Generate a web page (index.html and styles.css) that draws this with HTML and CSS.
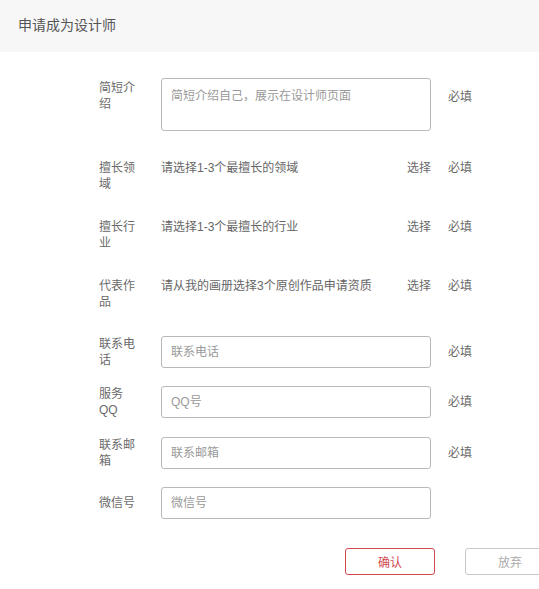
FILE: index.html
```html
<!DOCTYPE html>
<html lang="zh-CN">
<head>
  <meta charset="UTF-8">
  <meta name="viewport" content="width=device-width, initial-scale=1.0">
  <title>申请成为设计师</title>
  <link rel="stylesheet" href="styles.css">
</head>
<body>
  <header class="page-head">
    <h1>申请成为设计师</h1>
  </header>
  <form class="apply-form">
    <div class="row row-area">
      <label class="label">简短介绍</label>
      <textarea class="field area" placeholder="简短介绍自己，展示在设计师页面"></textarea>
      <span class="req">必填</span>
    </div>
    <div class="row row-text">
      <label class="label">擅长领域</label>
      <div class="field pick"><span>请选择1-3个最擅长的领域</span><a class="choose">选择</a></div>
      <span class="req">必填</span>
    </div>
    <div class="row row-text">
      <label class="label">擅长行业</label>
      <div class="field pick"><span>请选择1-3个最擅长的行业</span><a class="choose">选择</a></div>
      <span class="req">必填</span>
    </div>
    <div class="row row-text">
      <label class="label">代表作品</label>
      <div class="field pick"><span>请从我的画册选择3个原创作品申请资质</span><a class="choose">选择</a></div>
      <span class="req">必填</span>
    </div>
    <div class="row row-input">
      <label class="label">联系电话</label>
      <input class="field input" type="text" placeholder="联系电话">
      <span class="req">必填</span>
    </div>
    <div class="row row-input row-qq">
      <label class="label">服务QQ</label>
      <input class="field input" type="text" placeholder="QQ号">
      <span class="req">必填</span>
    </div>
    <div class="row row-input">
      <label class="label">联系邮箱</label>
      <input class="field input" type="text" placeholder="联系邮箱">
      <span class="req">必填</span>
    </div>
    <div class="row row-input">
      <label class="label">微信号</label>
      <input class="field input" type="text" placeholder="微信号">
    </div>
    <div class="actions">
      <button type="button" class="btn btn-ok">确认</button>
      <button type="button" class="btn btn-cancel">放弃</button>
    </div>
  </form>
</body>
</html>
```

FILE: styles.css
```css
html, body {
  overflow: hidden;
}
body {
  margin: 0;
  background: #fff;
  font-family: "Liberation Sans", "Noto Sans CJK SC", sans-serif;
  font-size: 12px;
  color: #6a6a6a;
}
.page-head {
  height: 52px;
  background: #f7f7f8;
  padding-left: 18px;
}
.page-head h1 {
  margin: 0;
  font-size: 14px;
  font-weight: normal;
  line-height: 50px;
  color: #555;
}
.apply-form {
  padding-left: 99px;
  padding-top: 26px;
}
.row {
  display: flex;
  line-height: 16px;
}
.label {
  width: 40px;
  margin-right: 22px;
  flex-shrink: 0;
  color: #6a6a6a;
}
.field {
  width: 270px;
  box-sizing: border-box;
  flex-shrink: 0;
  font-family: inherit;
  font-size: 12px;
  color: #666;
}
.req {
  margin-left: 17px;
}
.row-area {
  align-items: flex-start;
  margin-bottom: 29px;
}
.row-area .label {
  padding-top: 2px;
}
.area {
  height: 53px;
  border: 1px solid #b9b9b9;
  border-radius: 3px;
  padding: 9px 9px;
  line-height: 17px;
  resize: none;
  outline: none;
}
.row-area .req {
  padding-top: 11px;
}
.row-text {
  align-items: flex-start;
  margin-bottom: 27px;
}
.pick {
  display: flex;
  justify-content: space-between;
}
.choose {
  color: #6a6a6a;
  cursor: pointer;
}
.row-input {
  align-items: center;
  margin-bottom: 18px;
}
.row-qq {
  margin-bottom: 19px;
}
.row-text + .row-input {
  margin-top: -1px;
}
.input {
  height: 32px;
  border: 1px solid #b9b9b9;
  border-radius: 3px;
  padding: 0 9px;
  outline: none;
}
::placeholder {
  color: #999;
}
.actions {
  display: flex;
  gap: 30px;
  margin-left: 246px;
  margin-top: 29px;
}
.btn {
  width: 90px;
  height: 27px;
  flex-shrink: 0;
  background: #fff;
  border-radius: 3px;
  font-family: inherit;
  font-size: 12px;
  cursor: pointer;
}
.btn-ok {
  border: 1px solid #d0494f;
  color: #d0494f;
}
.btn-cancel {
  border: 1px solid #c8c8c8;
  color: #aaa;
}
```
